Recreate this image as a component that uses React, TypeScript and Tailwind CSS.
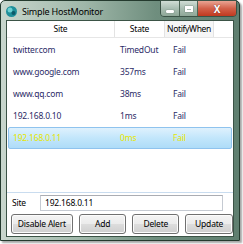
const rows = [
  { site: 'twitter.com', state: 'TimedOut', notify: 'Fail' },
  { site: 'www.google.com', state: '357ms', notify: 'Fail' },
  { site: 'www.qq.com', state: '38ms', notify: 'Fail' },
  { site: '192.168.0.10', state: '1ms', notify: 'Fail' },
  { site: '192.168.0.11', state: '0ms', notify: 'Fail', selected: true },
];

const buttons = [
  { label: 'Disable Alert', w: 'w-[62px]' },
  { label: 'Add', w: 'w-[48px]' },
  { label: 'Delete', w: 'w-[47px]' },
  { label: 'Update', w: 'w-[48px]' },
];

function AppIcon() {
  return (
    <svg width="13" height="13" viewBox="0 0 13 13">
      <circle cx="6.5" cy="6.5" r="5.5" fill="#1f8f9a" />
      <circle cx="5" cy="5" r="2.5" fill="#7fe0e0" opacity="0.8" />
      <circle cx="8.5" cy="8" r="2" fill="#0c5a6a" />
    </svg>
  );
}

export default function App() {
  return (
    <div className="w-[243px] h-[244px] bg-white font-['Noto_Sans',sans-serif] text-[8.5px] tracking-[-0.2px] leading-none">
      <div className="w-[240px] h-[241px] flex flex-col rounded-t-[5px] border border-[#243a2e] bg-[linear-gradient(90deg,#c8d6cd_0%,#9fb7a9_35%,#6f8e7e_65%,#5f7f70_100%)] shadow-[2px_2px_2px_rgba(0,0,0,0.35)]">
        {/* title bar */}
        <div className="h-[19px] flex items-start shrink-0">
          <div className="flex items-center gap-[4px] pl-[4px] pt-[4px]">
            <AppIcon />
            <span className="text-[9px] text-black">Simple HostMonitor</span>
          </div>
          <div className="ml-auto mr-[2px] flex h-[17px] -mt-px rounded-b-[4px] border border-[#3b5346] overflow-hidden">
            <div className="w-[19px] flex items-center justify-center bg-[linear-gradient(180deg,#d0ddd5,#a9beb2_50%,#8ea797)] border-r border-[#4d6656]">
              <div className="w-[8px] h-[3px] bg-white rounded-[1px] shadow-[0_0_1px_#3d4d45] mt-[5px]" />
            </div>
            <div className="w-[18px] flex items-center justify-center bg-[linear-gradient(180deg,#d0ddd5,#a9beb2_50%,#8ea797)] border-r border-[#4d6656]">
              <div className="w-[8px] h-[6px] border-[2px] border-t-[3px] border-white shadow-[0_0_1px_#3d4d45]" />
            </div>
            <div className="w-[38px] flex items-center justify-center bg-[linear-gradient(180deg,#e9a493,#d2614a_50%,#c0391f)]">
              <span className="text-white font-bold text-[10px] [text-shadow:0_0_1px_#5a1a10]">X</span>
            </div>
          </div>
        </div>
        {/* client */}
        <div className="flex-1 mx-[5px] mb-[3px] flex flex-col bg-white border border-[#3b5346]">
          <div className="h-[172px] border-b border-[#c9dcef] flex flex-col">
            <div className="h-[17px] flex items-center text-black border-b border-[#e6e6e6] shrink-0">
              <div className="w-[108px] text-center border-r border-[#e3e3e3] h-full flex items-center justify-center">Site</div>
              <div className="w-[50px] text-center border-r border-[#e3e3e3] h-full flex items-center justify-center">State</div>
              <div className="w-[49px] text-center border-r border-[#e3e3e3] h-full flex items-center justify-center bg-[#f6f6f6] whitespace-nowrap tracking-[-0.35px]">NotifyWhen</div>
            </div>
            <div className="pt-[1px]">
              {rows.map((r) => (
                <div
                  key={r.site}
                  className={`h-[22px] mx-px flex items-center rounded-[2px] ${
                    r.selected
                      ? 'bg-[linear-gradient(180deg,#dff1fd,#c2e6fb_50%,#aedcf8)] border border-[#8fc3ee] text-[#e6e600]'
                      : 'border border-transparent text-[#2b2a66]'
                  }`}
                >
                  <div className="w-[107px] pl-[4px]">{r.site}</div>
                  <div className="w-[51px] pl-[4px]">{r.state}</div>
                  <div className="pl-[6px]">{r.notify}</div>
                </div>
              ))}
            </div>
          </div>
          <div className="flex items-center mt-[2px] h-[16px]">
            <span className="w-[33px] pl-[5px] text-black">Site</span>
            <div className="w-[183px] h-[16px] border border-[#c5cad2] border-t-[#abadb3] flex items-center pl-[4px] text-black">
              192.168.0.11
            </div>
          </div>
          <div className="flex gap-[6px] pl-[4px] mt-[3px]">
            {buttons.map((b) => (
              <div
                key={b.label}
                className={`${b.w} h-[20px] flex items-center justify-center rounded-[3px] border border-[#707070] bg-[linear-gradient(180deg,#f4f4f4,#ebebeb_50%,#dddddd_51%,#cfcfcf)] text-black shadow-[inset_0_0_0_1px_#fcfcfc]`}
              >
                {b.label}
              </div>
            ))}
          </div>
        </div>
      </div>
    </div>
  );
}
